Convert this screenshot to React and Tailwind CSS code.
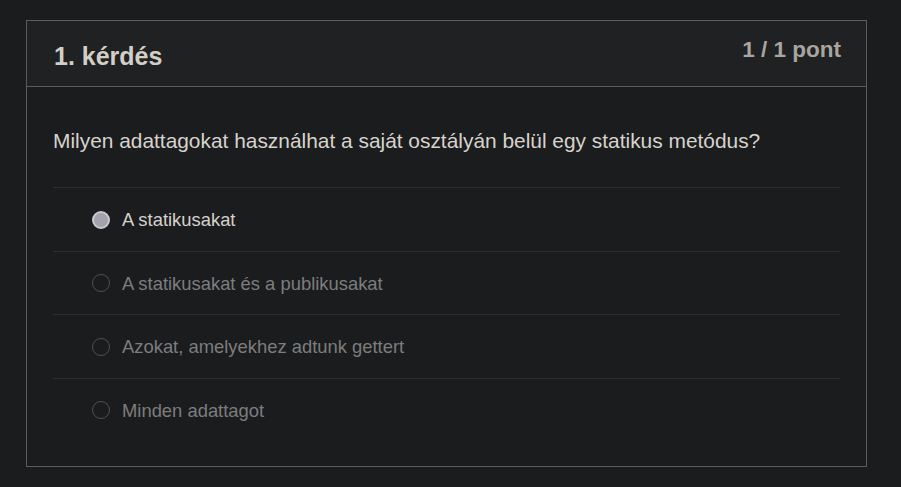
import React, { useState } from 'react';

const options = [
  'A statikusakat',
  'A statikusakat és a publikusakat',
  'Azokat, amelyekhez adtunk gettert',
  'Minden adattagot',
];

export default function App() {
  const [selected, setSelected] = useState(0);

  return (
    <div
      className="min-h-[487px] w-full bg-[#1b1c1e] pt-5 pb-5"
      style={{ fontFamily: '"Liberation Sans", Arial, sans-serif' }}
    >
      <div className="ml-[26px] w-[841px] border border-[#5b5b5c] bg-[#1b1c1e]">
        {/* Header */}
        <div className="flex h-[66px] items-start justify-between border-b border-[#5b5b5c] bg-[#202123] pl-[27px] pr-[25px]">
          <h2 className="pt-[20px] text-[25px] font-bold leading-[30px] text-[#d3cec6]">
            1. kérdés
          </h2>
          <span className="pt-[15px] text-[22.5px] font-bold leading-[28px] text-[#aaa59f]">
            1 / 1 pont
          </span>
        </div>

        {/* Body */}
        <div className="px-[26px] pb-[25px]">
          <p className="pt-[41px] pb-[33px] text-[20.9px] leading-[26px] text-[#d7d3cd]">
            Milyen adattagokat használhat a saját osztályán belül egy statikus metódus?
          </p>

          <div>
            {options.map((opt, i) => {
              const active = i === selected;
              return (
                <label
                  key={opt}
                  onClick={() => setSelected(i)}
                  className="flex h-[63.5px] cursor-pointer items-center gap-3 border-t border-[#2d2e30] pl-[39px]"
                >
                  <span
                    className={
                      active
                        ? 'mt-[1px] h-[18px] w-[18px] shrink-0 rounded-full border-2 border-[#c9c7d0] bg-[#a4a2ad]'
                        : 'mt-[1px] h-[18px] w-[18px] shrink-0 rounded-full border border-[#505155]'
                    }
                  />
                  <span
                    className={
                      active
                        ? 'pt-[2px] text-[18.4px] text-[#d5d1cb]'
                        : 'pt-[2px] text-[18.4px] text-[#7d7d7d]'
                    }
                  >
                    {opt}
                  </span>
                </label>
              );
            })}
          </div>
        </div>
      </div>
    </div>
  );
}
